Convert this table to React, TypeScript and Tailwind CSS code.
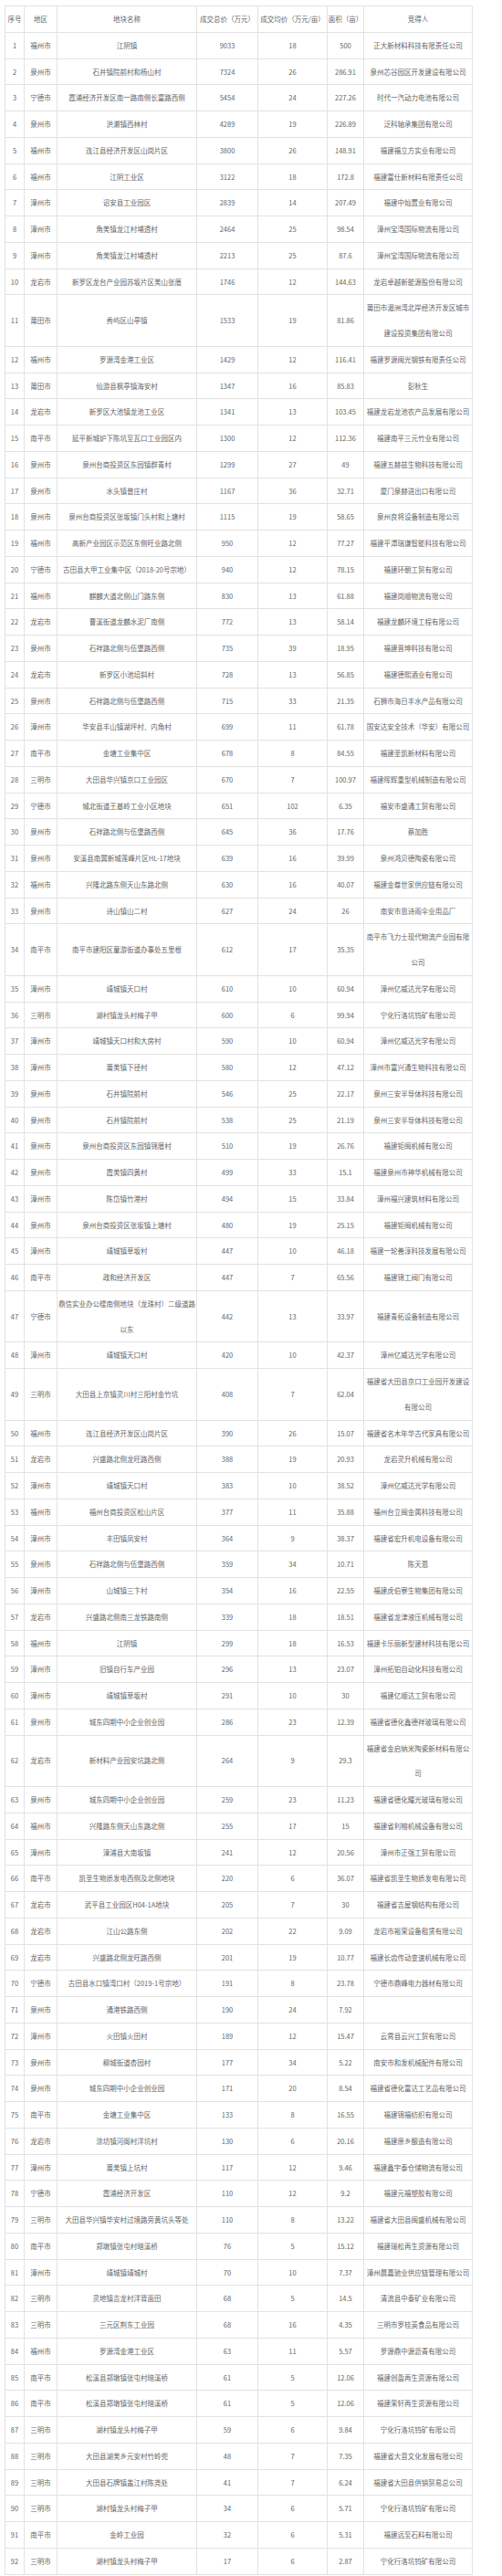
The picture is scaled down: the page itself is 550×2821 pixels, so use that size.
const rows: [string, string, string, string, string, string][] = [
  ['福州市', '江阴镇', '9033', '18', '500', '正大新材料科技有限责任公司'],
  ['泉州市', '石井镇院前村和杨山村', '7324', '26', '286.91', '泉州芯谷园区开发建设有限公司'],
  ['宁德市', '霞浦经济开发区南一路南侧长富路西侧', '5454', '24', '227.26', '时代一汽动力电池有限公司'],
  ['泉州市', '洪濑镇西林村', '4289', '19', '226.89', '泛科轴承集团有限公司'],
  ['福州市', '连江县经济开发区山岗片区', '3800', '26', '148.91', '福建福立方实业有限公司'],
  ['福州市', '江阴工业区', '3122', '18', '172.8', '福建富仕新材料有限责任公司'],
  ['漳州市', '诏安县工业园区', '2839', '14', '207.49', '福建中灿置业有限公司'],
  ['漳州市', '角美镇龙江村埔透村', '2464', '25', '98.54', '漳州宝湾国际物流有限公司'],
  ['漳州市', '角美镇龙江村埔透村', '2213', '25', '87.6', '漳州宝湾国际物流有限公司'],
  ['龙岩市', '新罗区龙台产业园苏坂片区美山张厝', '1746', '12', '144.63', '龙岩卓越新能源股份有限公司'],
  ['莆田市', '秀屿区山亭镇', '1533', '19', '81.86', '莆田市湄洲湾北岸经济开发区城市\n建设投资集团有限公司'],
  ['福州市', '罗源湾金港工业区', '1429', '12', '116.41', '福建罗源闽光钢铁有限责任公司'],
  ['莆田市', '仙游县枫亭镇海安村', '1347', '16', '85.83', '彭秋生'],
  ['龙岩市', '新罗区大池镇龙池工业区', '1341', '13', '103.45', '福建龙岩龙池农产品发展有限公司'],
  ['南平市', '延平新城炉下陈坑至瓦口工业园区内', '1300', '12', '112.36', '福建南平三元竹业有限公司'],
  ['泉州市', '泉州台商投资区东园镇群青村', '1299', '27', '49', '福建五赫兹生物科技有限公司'],
  ['泉州市', '水头镇普庄村', '1167', '36', '32.71', '厦门泉赫进出口有限公司'],
  ['泉州市', '泉州台商投资区张坂镇门头村和上塘村', '1115', '19', '58.65', '泉州良将设备制造有限公司'],
  ['福州市', '高新产业园区示范区东侧旺业路北侧', '950', '12', '77.27', '福建平潭瑞谦智能科技有限公司'],
  ['宁德市', '古田县大甲工业集中区（2018-20号宗地）', '940', '12', '78.15', '福建环朝工贸有限公司'],
  ['福州市', '麒麟大道北侧山门路东侧', '830', '13', '61.88', '福建岗顺物流有限公司'],
  ['龙岩市', '曹溪街道龙麟水泥厂南侧', '772', '13', '58.14', '福建龙麟环境工程有限公司'],
  ['泉州市', '石祥路北侧与伍堡路西侧', '735', '39', '18.95', '福建晋坤科技有限公司'],
  ['龙岩市', '新罗区小池培斜村', '728', '13', '56.85', '福建德熙酒业有限公司'],
  ['泉州市', '石祥路北侧与伍堡路西侧', '715', '33', '21.35', '石狮市海日丰水产品有限公司'],
  ['漳州市', '华安县丰山镇湖坪村、内角村', '699', '11', '61.78', '国安达安全技术（华安）有限公司'],
  ['南平市', '金塘工业集中区', '678', '8', '84.55', '福建圣凯新材料有限公司'],
  ['三明市', '大田县华兴镇京口工业园区', '670', '7', '100.97', '福建晖辉重型机械制造有限公司'],
  ['宁德市', '城北街道王基岭工业小区地块', '651', '102', '6.35', '福安市盛通工贸有限公司'],
  ['泉州市', '石祥路北侧与伍堡路西侧', '645', '36', '17.76', '蔡加胜'],
  ['泉州市', '安溪县南翼新城莲峰片区HL-17地块', '639', '16', '39.99', '泉州鸿贝德陶瓷有限公司'],
  ['福州市', '兴隆北路东侧天山东路北侧', '630', '16', '40.07', '福建金尊世家供应链有限公司'],
  ['泉州市', '诗山镇山二村', '627', '24', '26', '南安市思诗雨伞业用品厂'],
  ['南平市', '南平市建阳区童游街道办事处五里根', '612', '17', '35.35', '南平市飞力士现代物流产业园有限\n公司'],
  ['漳州市', '靖城镇天口村', '610', '10', '60.94', '漳州亿威达光学有限公司'],
  ['三明市', '湖村镇龙头村梅子甲', '600', '6', '99.94', '宁化行洛坑钨矿有限公司'],
  ['漳州市', '靖城镇天口村和大房村', '590', '10', '60.94', '漳州亿威达光学有限公司'],
  ['漳州市', '莆美镇下径村', '580', '12', '47.12', '漳州市富兴通生物科技有限公司'],
  ['泉州市', '石井镇院前村', '546', '25', '22.17', '泉州三安半导体科技有限公司'],
  ['泉州市', '石井镇院前村', '538', '25', '21.19', '泉州三安半导体科技有限公司'],
  ['泉州市', '泉州台商投资区东园镇锦厝村', '510', '19', '26.76', '福建钜闽机械有限公司'],
  ['泉州市', '霞美镇四黄村', '499', '33', '15.1', '福建泉州市神华机械有限公司'],
  ['漳州市', '陈岱镇竹港村', '494', '15', '33.84', '漳州福兴建筑材料有限公司'],
  ['泉州市', '泉州台商投资区张坂镇上塘村', '480', '19', '25.15', '福建钜闽机械有限公司'],
  ['漳州市', '靖城镇草坂村', '447', '10', '46.18', '福建一轮善淳科技发展有限公司'],
  ['南平市', '政和经济开发区', '447', '7', '65.56', '福建锦工阀门有限公司'],
  ['宁德市', '鼎信实业办公楼南侧地块（龙珠村）二级道路\n以东', '442', '13', '33.97', '福建青拓设备制造有限公司'],
  ['漳州市', '靖城镇天口村', '420', '10', '42.37', '漳州亿威达光学有限公司'],
  ['三明市', '大田县上京镇灵川村三阳村金竹坑', '408', '7', '62.04', '福建省大田县京口工业园开发建设\n有限公司'],
  ['福州市', '连江县经济开发区山岗片区', '390', '26', '15.07', '福建省名木年华古代家具有限公司'],
  ['龙岩市', '兴盛路北侧龙旺路西侧', '388', '19', '20.93', '龙岩灵升机械有限公司'],
  ['漳州市', '靖城镇天口村', '383', '10', '38.52', '漳州亿威达光学有限公司'],
  ['福州市', '福州台商投资区松山片区', '377', '11', '35.88', '福州台立闽金属科技有限公司'],
  ['漳州市', '丰田镇凤安村', '364', '9', '38.37', '福建省宏升机电设备有限公司'],
  ['泉州市', '石祥路北侧与伍堡路西侧', '359', '34', '10.71', '陈天恩'],
  ['漳州市', '山城镇三卞村', '354', '16', '22.55', '福建虎伯寮生物集团有限公司'],
  ['龙岩市', '兴盛路北侧南三龙铁路南侧', '339', '18', '18.51', '福建省龙津液压机械有限公司'],
  ['福州市', '江阴镇', '299', '18', '16.53', '福建卡乐丽新型建材科技有限公司'],
  ['漳州市', '旧镇自行车产业园', '296', '13', '23.07', '漳州拓铂自动化科技有限公司'],
  ['漳州市', '靖城镇草坂村', '291', '10', '30', '福建亿顺达工贸有限公司'],
  ['泉州市', '城东四期中小企业创业园', '286', '23', '12.39', '福建省德化鑫德祥玻璃有限公司'],
  ['龙岩市', '新材料产业园安坑路北侧', '264', '9', '29.3', '福建省金启纳米陶瓷新材料有限公\n司'],
  ['泉州市', '城东四期中小企业创业园', '259', '23', '11.23', '福建省德化耀光玻璃有限公司'],
  ['福州市', '兴隆路东侧天山东路北侧', '255', '17', '15', '福建省利榕机械设备有限公司'],
  ['漳州市', '漳浦县大南坂镇', '241', '12', '20.56', '漳州市正强工贸有限公司'],
  ['南平市', '凯圣生物质发电西侧及北侧地块', '220', '6', '36.07', '福建省凯圣生物质发电有限公司'],
  ['龙岩市', '武平县工业园区H04-1A地块', '205', '7', '30', '福建省吉屋钢结构有限公司'],
  ['龙岩市', '江山公路东侧', '202', '22', '9.09', '龙岩市裕荣设备租赁有限公司'],
  ['龙岩市', '兴盛路北侧龙旺路西侧', '201', '19', '10.77', '福建长齿传动变速机械有限公司'],
  ['宁德市', '古田县水口镇湾口村（2019-1号宗地）', '191', '8', '23.78', '宁德市鼎峰电力器材有限公司'],
  ['泉州市', '通港铁路西侧', '190', '24', '7.92', ''],
  ['漳州市', '火田镇火田村', '189', '12', '15.47', '云霄县云兴工贸有限公司'],
  ['泉州市', '柳城街道杏园村', '177', '34', '5.22', '南安市和发机械配件有限公司'],
  ['泉州市', '城东四期中小企业创业园', '171', '20', '8.54', '福建省德化富达工艺品有限公司'],
  ['南平市', '金塘工业集中区', '133', '8', '16.55', '福建锦福纺织有限公司'],
  ['龙岩市', '涂坊镇河阁村洋坑村', '130', '6', '20.16', '福建原乡酿造有限公司'],
  ['漳州市', '莆美镇上坑村', '117', '12', '9.46', '福建鑫宇泰仓储物流有限公司'],
  ['宁德市', '霞浦经济开发区', '110', '12', '9.2', '福建元福塑胶有限公司'],
  ['三明市', '大田县华兴镇华安村过境路旁黄坑头等处', '110', '8', '13.22', '福建省大田县闽盛机械有限公司'],
  ['南平市', '郑墩镇张屯村暗溪桥', '76', '5', '15.12', '福建瑞松再生资源有限公司'],
  ['漳州市', '靖城镇靖城村', '70', '10', '7.37', '漳州晨嘉驰业供应链管理有限公司'],
  ['三明市', '灵地镇吉龙村洋背面田', '68', '5', '14.5', '清流县中泰矿业有限公司'],
  ['三明市', '三元区荆东工业园', '68', '16', '4.35', '三明市罗桂英食品有限公司'],
  ['福州市', '罗源湾金港工业区', '63', '11', '5.57', '罗源鼎中源沥青有限公司'],
  ['南平市', '松溪县郑墩镇张屯村暗溪桥', '61', '5', '12.06', '福建创盈再生资源有限公司'],
  ['南平市', '松溪县郑墩镇张屯村暗溪桥', '61', '5', '12.06', '福建荣轩再生资源有限公司'],
  ['三明市', '湖村镇龙头村梅子甲', '59', '6', '9.84', '宁化行洛坑钨矿有限公司'],
  ['三明市', '大田县湖美乡元安村竹岭兜', '48', '7', '7.35', '福建省大音文化发展有限公司'],
  ['三明市', '大田县石牌镇盖江村陈尧处', '41', '7', '6.24', '福建省大田县供销贸易总公司'],
  ['三明市', '湖村镇龙头村梅子甲', '34', '6', '5.71', '宁化行洛坑钨矿有限公司'],
  ['南平市', '金岭工业园', '32', '6', '5.31', '福建远至石料有限公司'],
  ['三明市', '湖村镇龙头村梅子甲', '17', '6', '2.87', '宁化行洛坑钨矿有限公司'],
]

const headers = ['序号', '地区', '地块名称', '成交总价（万元）', '成交均价（万元/亩）', '面积（亩）', '竞得人']

const cell = 'border border-[#e2e2e2] p-0 text-center align-middle whitespace-pre leading-[27.75px]'

export default function App() {
  return (
    <div className="min-h-screen bg-white pt-[6px] pl-[5px] text-[7.5px] text-[#666] [font-family:'Noto_Sans_CJK_SC','Noto_Sans',sans-serif]">
      <table className="w-[512px] table-fixed border-collapse">
        <colgroup>
          <col className="w-[21px]" />
          <col className="w-[36px]" />
          <col className="w-[153px]" />
          <col className="w-[67px]" />
          <col className="w-[76px]" />
          <col className="w-[40px]" />
          <col className="w-[119px]" />
        </colgroup>
        <thead>
          <tr>
            {headers.map((h) => (
              <th key={h} className={`${cell} font-normal`}>
                {h}
              </th>
            ))}
          </tr>
        </thead>
        <tbody>
          {rows.map((r, i) => (
            <tr key={i}>
              <td className={cell}>{i + 1}</td>
              {r.map((v, j) => (
                <td key={j} className={cell}>
                  {v}
                </td>
              ))}
            </tr>
          ))}
        </tbody>
      </table>
    </div>
  )
}
